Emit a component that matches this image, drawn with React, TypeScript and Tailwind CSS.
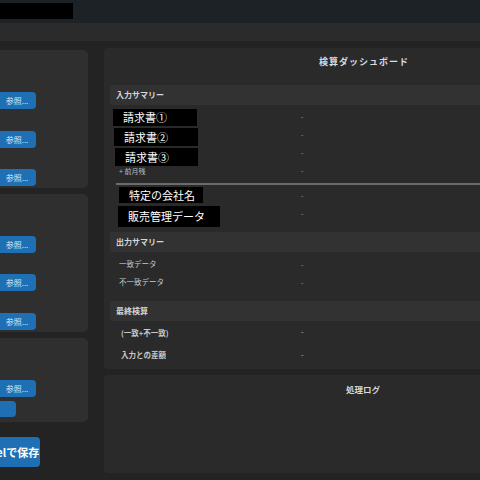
import React from "react";

const jp = { fontFamily: '"Noto Sans CJK JP", "Noto Sans", sans-serif' };

function RefBtn() {
  return (
    <div className="-ml-[6px] flex h-[17px] w-[42px] items-center justify-center rounded-[4px] bg-[#1f6fb4] pl-[4px] text-[8px] text-[#dbe7f3]">
      参照...
    </div>
  );
}

function Band({ label }: { label: string }) {
  return (
    <div className="flex h-[20px] items-center rounded-[2px] bg-[#323232] pl-[6px] text-[8px] font-bold text-[#d6d6d6]">
      {label}
    </div>
  );
}

function BoxRow({ text, h, ml, w, mt }: { text: string; h: string; ml: string; w: string; mt: string }) {
  return (
    <div className={`flex items-center ${mt}`}>
      <div className={`flex shrink-0 items-center bg-black text-[11px] text-white ${h} ${ml} ${w}`}>
        <span className="pl-[10px]">{text}</span>
      </div>
    </div>
  );
}

function Val({ className = "" }: { className?: string }) {
  return <span className={`absolute left-[191px] text-[7px] text-[#9a9a9a] ${className}`}>-</span>;
}

export default function App() {
  return (
    <div className="h-[480px] w-[480px] overflow-hidden bg-[#232323]" style={jp}>
      <div className="flex h-[23px] items-start bg-[#1c2226] pt-[3px]">
        <div className="h-[16px] w-[73px] bg-black" />
      </div>
      <div className="h-[18px] bg-[#2b2b2b]" />
      <div className="flex pt-[7px]">
        {/* left column */}
        <div className="flex w-[88px] shrink-0 flex-col pt-[2px]">
          <div className="flex h-[138px] flex-col gap-[22px] rounded-r-[5px] bg-[#2f2f2f] pt-[42px]">
            <RefBtn />
            <RefBtn />
            <div className="-mt-[1px]">
              <RefBtn />
            </div>
          </div>
          <div className="mt-[6px] flex h-[138px] flex-col gap-[21px] rounded-r-[5px] bg-[#2f2f2f] pt-[42px]">
            <RefBtn />
            <RefBtn />
            <div className="mt-[1px]">
              <RefBtn />
            </div>
          </div>
          <div className="mt-[6px] flex h-[84px] flex-col gap-[4px] rounded-r-[5px] bg-[#2f2f2f] pt-[42px]">
            <RefBtn />
            <div className="-ml-[10px] h-[16px] w-[26px] rounded-[4px] bg-[#1f6fb4]" />
          </div>
          <div className="mt-[15px] flex h-[30px] w-[62px] -ml-[22px] items-center justify-center rounded-[4px] bg-[#1f6fb4] text-[11px] font-bold text-white">
            Excelで保存
          </div>
        </div>

        {/* right column */}
        <div className="ml-[16px] flex w-[518px] shrink-0 flex-col">
          <div className="flex h-[321px] flex-col rounded-[4px] bg-[#2a2a2a] px-[6px]">
            <div className="flex h-[37px] items-center justify-center pb-[10px] pl-[2px] text-[9px] font-bold tracking-[1px] text-[#d8dce2]">
              検算ダッシュボード
            </div>
            <Band label="入力サマリー" />
            <div className="relative">
              <BoxRow text="請求書①" h="h-[17px]" ml="ml-[3px]" w="w-[84px]" mt="mt-[4px]" />
              <BoxRow text="請求書②" h="h-[18px]" ml="ml-[4px]" w="w-[84px]" mt="mt-[2px]" />
              <BoxRow text="請求書③" h="h-[18px]" ml="ml-[5px]" w="w-[83px]" mt="mt-[2px]" />
              <div className="flex h-[10px] items-center pl-[9px] text-[7px] text-[#bbbbbb]">+ 前月残</div>
              <Val className="top-[6px]" />
              <Val className="top-[24px]" />
              <Val className="top-[42px]" />
              <Val className="top-[60px]" />
            </div>
            <div className="ml-[6px] mt-[7px] h-[2px] bg-[#6c6c6c]" />
            <div className="relative">
              <BoxRow text="特定の会社名" h="h-[16px]" ml="ml-[9px]" w="w-[84px]" mt="mt-[2px]" />
              <BoxRow text="販売管理データ" h="h-[21px]" ml="ml-[8px]" w="w-[102px]" mt="mt-[3px]" />
              <Val className="top-[5px]" />
              <Val className="top-[23px]" />
            </div>
            <div className="mt-[5px]">
              <Band label="出力サマリー" />
            </div>
            <div className="relative flex flex-col pl-[9px] text-[7.5px] text-[#c8c8c8]">
              <div className="flex h-[18px] items-center mt-[3px]">一致データ</div>
              <div className="flex h-[18px] items-center">不一致データ</div>
              <Val className="top-[7px]" />
              <Val className="top-[25px]" />
            </div>
            <div className="mt-[10px]">
              <Band label="最終検算" />
            </div>
            <div className="relative flex flex-col pl-[11px] text-[7.5px] font-bold text-[#c8c8c8]">
              <div className="flex h-[20px] items-center mt-[2px]">(一致+不一致)</div>
              <div className="flex h-[20px] items-center mt-[2px]">入力との差額</div>
              <Val className="top-[6px]" />
              <Val className="top-[29px]" />
            </div>
          </div>
          <div className="mt-[6px] flex h-[98px] justify-center rounded-[4px] bg-[#2a2a2a] pt-[8px] text-[8.5px] font-bold text-[#d8d8d8]">
            処理ログ
          </div>
        </div>
      </div>
    </div>
  );
}
